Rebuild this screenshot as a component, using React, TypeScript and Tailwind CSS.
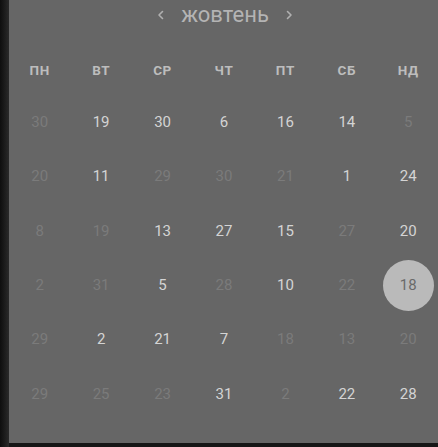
const weekdays = ["ПН", "ВТ", "СР", "ЧТ", "ПТ", "СБ", "НД"]

// [day, faded]
const rows: [number, boolean][][] = [
  [[30, true], [19, false], [30, false], [6, false], [16, false], [14, false], [5, true]],
  [[20, true], [11, false], [29, true], [30, true], [21, true], [1, false], [24, false]],
  [[8, true], [19, true], [13, false], [27, false], [15, false], [27, true], [20, false]],
  [[2, true], [31, true], [5, false], [28, true], [10, false], [22, true], [18, false]],
  [[29, true], [2, false], [21, false], [7, false], [18, true], [13, true], [20, true]],
  [[29, true], [25, true], [23, true], [31, false], [2, true], [22, false], [28, false]],
]

const Chevron = ({ dir }: { dir: "left" | "right" }) => (
  <svg width="10" height="12" viewBox="0 0 10 12" fill="none">
    <path
      d={dir === "left" ? "M6.5 2.5 L3 6 L6.5 9.5" : "M3.5 2.5 L7 6 L3.5 9.5"}
      stroke="#b0b0b0"
      strokeWidth="1.6"
      strokeLinecap="round"
      strokeLinejoin="round"
    />
  </svg>
)

const App = () => {
  return (
    <div className="w-[438px] h-[447px] bg-[#161616] flex overflow-hidden">
      <div className="w-[9px] h-full shrink-0 bg-gradient-to-r from-[#0e0e0e] to-[#2a2a2a]" />
      <div
        className="w-[430px] h-[443px] shrink-0 bg-[#666666] flex flex-col"
        style={{ fontFamily: "Roboto, 'Open Sans', sans-serif" }}
      >
        {/* Month header */}
        <div className="h-[30px] flex items-center justify-center gap-[15px] pl-[2px]">
          <Chevron dir="left" />
          <span className="text-[22px] leading-none text-[#b4b4b4] -mt-[1px]">жовтень</span>
          <Chevron dir="right" />
        </div>

        {/* Weekdays */}
        <div className="grid grid-cols-7 h-[40px] mt-[20px] items-center">
          {weekdays.map((d) => (
            <div key={d} className="text-center text-[13.5px] font-bold text-[#bdbdbd] tracking-[0.6px]">
              {d}
            </div>
          ))}
        </div>

        {/* Days */}
        <div className="mt-[4.8px] flex flex-col">
          {rows.map((row, i) => (
            <div key={i} className="grid grid-cols-7 h-[54.4px] items-center">
              {row.map(([day, faded], j) => {
                const selected = i === 3 && j === 6
                return (
                  <div key={j} className="flex justify-center items-center">
                    {selected ? (
                      <div className="w-[51px] h-[51px] rounded-full bg-[#bababa] flex items-center justify-center text-[15px] text-[#6a6a6a]">
                        {day}
                      </div>
                    ) : (
                      <span className={`text-[15px] ${faded ? "text-[#7b7b7b]" : "text-[#d4d4d4]"}`}>
                        {day}
                      </span>
                    )}
                  </div>
                )
              })}
            </div>
          ))}
        </div>
      </div>
    </div>
  )
}

export default App
